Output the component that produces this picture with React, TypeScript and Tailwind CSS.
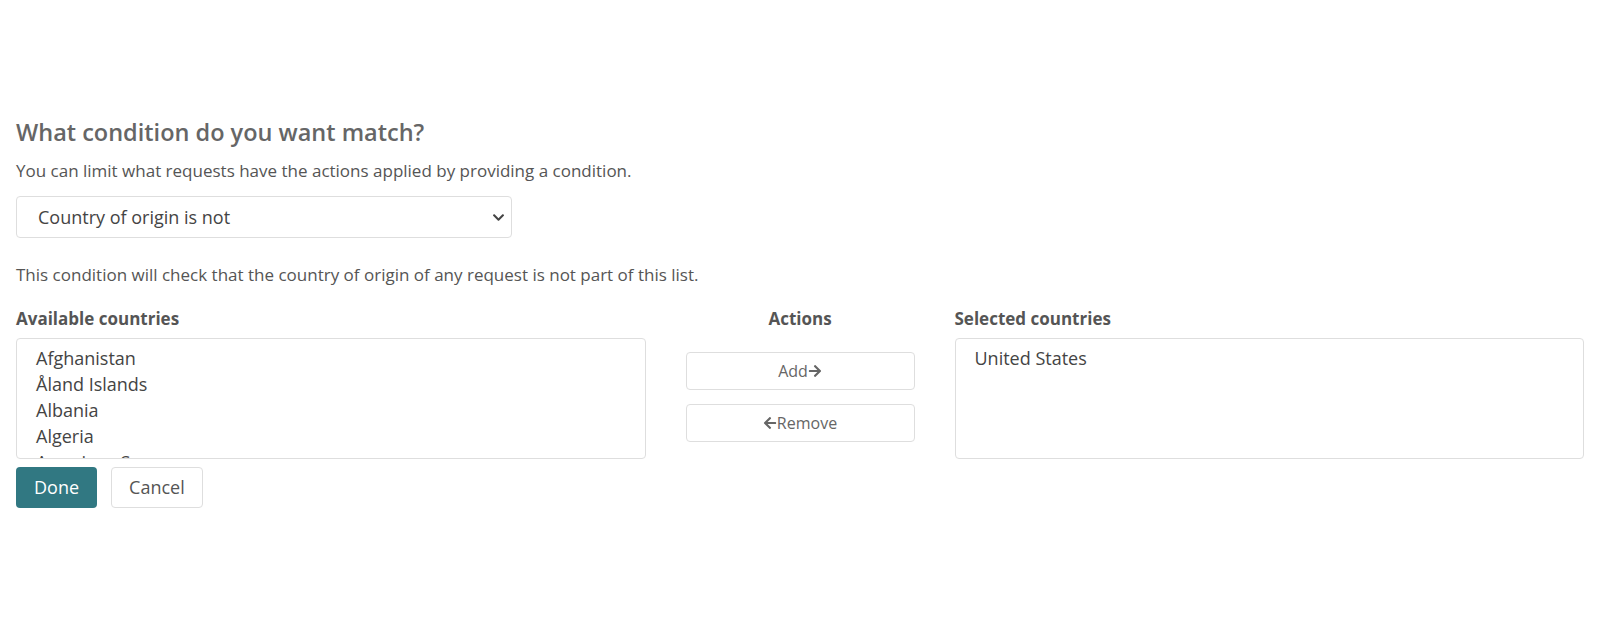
import React from 'react';
import { FaArrowRight, FaArrowLeft, FaChevronDown } from 'react-icons/fa';

const available = ['Afghanistan', 'Åland Islands', 'Albania', 'Algeria', 'American Samoa'];
const selected = ['United States'];

const ListBox: React.FC<{ items: string[] }> = ({ items }) => (
  <div className="h-[121px] overflow-hidden rounded-[4px] border border-[#dedede] bg-white pl-[19px] pt-[6px] text-[18px] leading-[26px] text-[#444]">
    {items.map((c) => (
      <div key={c}>{c}</div>
    ))}
  </div>
);

const App: React.FC = () => {
  return (
    <div className="min-h-[635px] bg-white px-4 pt-[117px] font-['Open_Sans',sans-serif] text-[#555]">
      <h2 className="text-[23.5px] font-semibold leading-[31px] text-[#666]">What condition do you want match?</h2>
      <p className="mt-[11px] text-[17px] leading-6">
        You can limit what requests have the actions applied by providing a condition.
      </p>

      {/* condition dropdown */}
      <div className="mt-[13px] flex h-[42px] w-[496px] items-center justify-between rounded-[4px] border border-[#dedede] bg-white pl-[21px] pr-[6px] text-[18px] text-[#444]">
        <span>Country of origin is not</span>
        <FaChevronDown className="h-[13px] w-[13px] text-[#444]" />
      </div>

      <p className="mt-[25px] text-[17px] leading-6">
        This condition will check that the country of origin of any request is not part of this list.
      </p>

      <div className="mt-[20px] grid grid-cols-[1fr_229px_1fr] gap-x-10">
        <div>
          <div className="mb-[7px] text-[17px] font-bold leading-6">Available countries</div>
          <ListBox items={available} />
        </div>
        <div className="flex flex-col">
          <div className="text-center text-[17px] font-bold leading-6">Actions</div>
          <button className="mt-[21px] flex h-[38px] items-center justify-center rounded-[4px] border border-[#dedede] bg-white text-[16px] text-[#666]">
            Add
            <FaArrowRight className="h-[14px] w-[14px]" />
          </button>
          <button className="mt-[14px] flex h-[38px] items-center justify-center rounded-[4px] border border-[#dedede] bg-white text-[16px] text-[#666]">
            <FaArrowLeft className="h-[14px] w-[14px]" />
            Remove
          </button>
        </div>
        <div>
          <div className="mb-[7px] text-[17px] font-bold leading-6">Selected countries</div>
          <ListBox items={selected} />
        </div>
      </div>

      <div className="mt-[8px] flex gap-[14px]">
        <button className="h-[41px] rounded-[4px] bg-[#317882] px-[18px] text-[18px] text-white">Done</button>
        <button className="h-[41px] rounded-[4px] border border-[#dedede] bg-white px-[17px] text-[18px] text-[#555]">
          Cancel
        </button>
      </div>
    </div>
  );
};

export default App;
